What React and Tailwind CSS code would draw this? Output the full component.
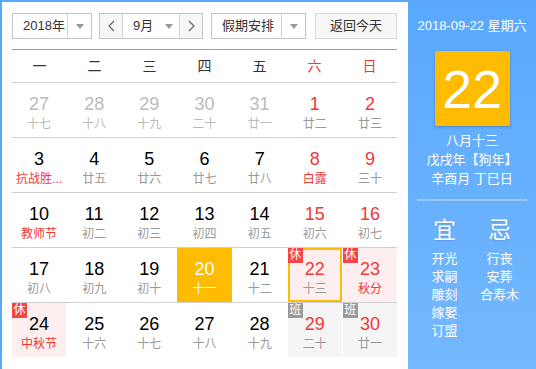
import React from "react";

const FONT = { fontFamily: '"Liberation Sans", "Noto Sans CJK SC", sans-serif' };

const weeks = [
  [
    { d: 27, l: "十七", prev: true },
    { d: 28, l: "十八", prev: true },
    { d: 29, l: "十九", prev: true },
    { d: 30, l: "二十", prev: true },
    { d: 31, l: "廿一", prev: true },
    { d: 1, l: "廿二", red: true },
    { d: 2, l: "廿三", red: true },
  ],
  [
    { d: 3, l: "抗战胜...", fest: true },
    { d: 4, l: "廿五" },
    { d: 5, l: "廿六" },
    { d: 6, l: "廿七" },
    { d: 7, l: "廿八" },
    { d: 8, l: "白露", red: true, fest: true },
    { d: 9, l: "三十", red: true },
  ],
  [
    { d: 10, l: "教师节", fest: true },
    { d: 11, l: "初二" },
    { d: 12, l: "初三" },
    { d: 13, l: "初四" },
    { d: 14, l: "初五" },
    { d: 15, l: "初六", red: true },
    { d: 16, l: "初七", red: true },
  ],
  [
    { d: 17, l: "初八" },
    { d: 18, l: "初九" },
    { d: 19, l: "初十" },
    { d: 20, l: "十一", today: true },
    { d: 21, l: "十二" },
    { d: 22, l: "十三", red: true, rest: true, selected: true },
    { d: 23, l: "秋分", red: true, rest: true, fest: true },
  ],
  [
    { d: 24, l: "中秋节", rest: true, fest: true },
    { d: 25, l: "十六" },
    { d: 26, l: "十七" },
    { d: 27, l: "十八" },
    { d: 28, l: "十九" },
    { d: 29, l: "二十", red: true, work: true },
    { d: 30, l: "廿一", red: true, work: true },
  ],
];

const Arrow = () => (
  <svg width="8" height="5" viewBox="0 0 8 5">
    <polygon points="0,0 8,0 4,5" fill="#999" />
  </svg>
);

const Chevron = ({ dir }) => (
  <svg width="7" height="12" viewBox="0 0 7 12">
    <polyline
      points={dir === "left" ? "6,1 1,6 6,11" : "1,1 6,6 1,11"}
      fill="none"
      stroke="#666"
      strokeWidth="1.2"
    />
  </svg>
);

const DayCell = ({ c }) => {
  let bg = "";
  if (c.today) bg = "bg-[#ffbb00]";
  else if (c.rest) bg = "bg-[#fdefef]";
  else if (c.work) bg = "bg-[#f5f5f5]";

  let numColor = "text-black";
  if (c.prev) numColor = "text-[#bbbbbb]";
  else if (c.today) numColor = "text-white";
  else if (c.red) numColor = "text-[#f03838]";

  let lunarColor = "text-[#999999]";
  if (c.prev) lunarColor = "text-[#bbbbbb]";
  else if (c.today) lunarColor = "text-white";
  else if (c.fest) lunarColor = "text-[#f03838]";

  return (
    <div
      className={`relative h-[54px] flex flex-col items-center ${bg} ${
        c.selected ? "border-2 border-[#ffbb00] pt-[8px]" : "pt-[10px]"
      }`}
    >
      {c.rest && (
        <span
          className={`absolute ${c.selected ? "-left-[2px] -top-[2px]" : "left-0 top-0"} w-[15px] h-[15px] bg-[#f54545] text-white text-[12px] leading-[15px] text-center`}
        >
          休
        </span>
      )}
      {c.work && (
        <span className="absolute left-0 top-0 w-[15px] h-[15px] bg-[#9a9a9a] text-white text-[12px] leading-[15px] text-center">
          班
        </span>
      )}
      <span className={`text-[18px] leading-[22px] ${numColor}`}>{c.d}</span>
      <span className={`mt-[1px] text-[12px] leading-[16px] whitespace-nowrap ${lunarColor}`}>{c.l}</span>
    </div>
  );
};

export default function App() {
  return (
    <div
      className="w-[536px] h-[369px] flex bg-[#59a8fd] pt-[2px] pl-[2px] overflow-hidden"
      style={FONT}
    >
      <div className="w-[406px] h-full bg-white pl-[10px] pr-[11px] pt-[11px]">
        {/* toolbar */}
        <div className="flex h-[26px] text-[13px] text-[#333]">
          <div className="w-[80px] flex border border-[#c4c4c4]">
            <div className="flex-1 flex items-center pl-[10px]">2018年</div>
            <div className="w-[24px] border-l border-[#d4d4d4] flex items-center justify-center">
              <Arrow />
            </div>
          </div>
          <div className="w-[104px] ml-[7px] flex border border-[#c4c4c4]">
            <div className="w-[23px] bg-[#f7f7f7] border-r border-[#d4d4d4] flex items-center justify-center">
              <Chevron dir="left" />
            </div>
            <div className="flex-1 flex items-center pl-[10px]">9月</div>
            <div className="w-[14px] flex items-center">
              <Arrow />
            </div>
            <div className="w-[23px] bg-[#f7f7f7] border-l border-[#d4d4d4] flex items-center justify-center">
              <Chevron dir="right" />
            </div>
          </div>
          <div className="w-[95px] ml-[8px] flex border border-[#c4c4c4]">
            <div className="flex-1 flex items-center pl-[10px]">假期安排</div>
            <div className="w-[24px] border-l border-[#d4d4d4] flex items-center justify-center">
              <Arrow />
            </div>
          </div>
          <button className="w-[82px] ml-[9px] bg-[#f7f7f7] border border-[#d8d8d8] text-[13px] text-[#333]">
            返回今天
          </button>
        </div>

        {/* week header */}
        <div className="mt-[10px] border-t border-[#6aa9f0] grid grid-cols-7 h-[33px] text-[14px] text-[#333]">
          {["一", "二", "三", "四", "五", "六", "日"].map((w, i) => (
            <div
              key={w}
              className={`flex items-center justify-center ${i >= 5 ? "text-[#f03838]" : ""}`}
            >
              {w}
            </div>
          ))}
        </div>

        {/* days */}
        {weeks.map((row, ri) => (
          <div
            key={ri}
            className={`grid grid-cols-7 gap-x-px ${ri < 5 ? "border-t border-[#cfcfcf]" : ""}`}
          >
            {row.map((c, ci) => (
              <DayCell key={ci} c={c} />
            ))}
          </div>
        ))}
      </div>

      {/* right panel */}
      <div className="flex-1 h-full bg-gradient-to-b from-[#59a8fd] to-[#74b8ff] flex flex-col items-center text-white">
        <div className="mt-[15px] text-[13px] leading-[18px]">2018-09-22 星期六</div>
        <div className="mt-[16px] w-[75px] h-[75px] rounded-[2px] bg-[#ffbb00] shadow-[0_1px_3px_rgba(0,0,0,0.2)] flex items-center justify-center text-[54px] leading-none">
          22
        </div>
        <div className="mt-[5px] text-[13px] leading-[19px] text-center">
          <div>八月十三</div>
          <div>戊戌年【狗年】</div>
          <div>辛酉月 丁巳日</div>
        </div>
        <div className="mt-[11px] w-[110px] h-[2px] bg-[#9ccbff]" />
        <div className="w-[110px] grid grid-cols-2 mt-[15px]">
          <div className="flex flex-col items-center">
            <div className="text-[23px] leading-[28px] [text-shadow:0_1px_2px_rgba(0,0,0,0.15)]">宜</div>
            <div className="mt-[6px] text-[13px] leading-[18px] text-center">
              <div>开光</div>
              <div>求嗣</div>
              <div>雕刻</div>
              <div>嫁娶</div>
              <div>订盟</div>
            </div>
          </div>
          <div className="flex flex-col items-center">
            <div className="text-[23px] leading-[28px] [text-shadow:0_1px_2px_rgba(0,0,0,0.15)]">忌</div>
            <div className="mt-[6px] text-[13px] leading-[18px] text-center">
              <div>行丧</div>
              <div>安葬</div>
              <div>合寿木</div>
            </div>
          </div>
        </div>
      </div>
    </div>
  );
}
